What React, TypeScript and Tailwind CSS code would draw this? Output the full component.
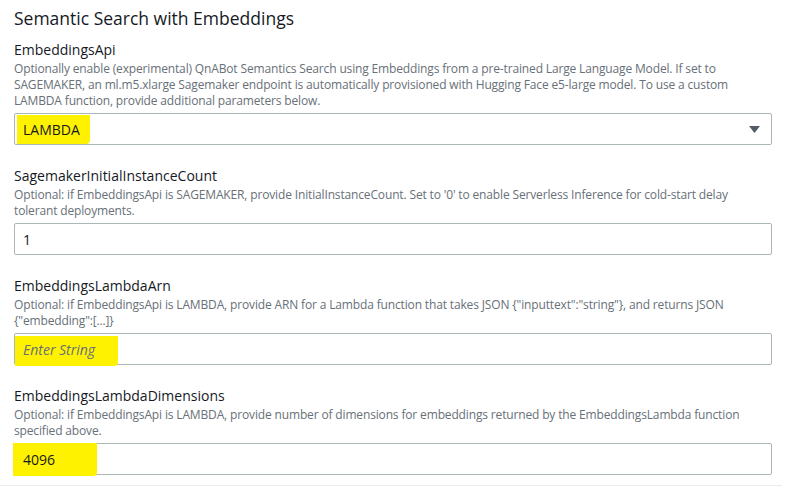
const fields = [
  {
    name: "EmbeddingsApi",
    lines: [
      "Optionally enable (experimental) QnABot Semantics Search using Embeddings from a pre-trained Large Language Model. If set to",
      "SAGEMAKER, an ml.m5.xlarge Sagemaker endpoint is automatically provisioned with Hugging Face e5-large model. To use a custom",
      "LAMBDA function, provide additional parameters below.",
    ],
    value: "LAMBDA",
    kind: "select",
    hl: "w-[73px] h-[29px] left-[2px] top-[1px]",
  },
  {
    name: "SagemakerInitialInstanceCount",
    lines: [
      "Optional: if EmbeddingsApi is SAGEMAKER, provide InitialInstanceCount. Set to '0' to enable Serverless Inference for cold-start delay",
      "tolerant deployments.",
    ],
    value: "1",
    kind: "input",
    hl: "",
  },
  {
    name: "EmbeddingsLambdaArn",
    lines: [
      'Optional: if EmbeddingsApi is LAMBDA, provide ARN for a Lambda function that takes JSON {"inputtext":"string"}, and returns JSON',
      '{"embedding":[...]}',
    ],
    value: "Enter String",
    kind: "placeholder",
    hl: "w-[103px] h-[30px] left-0 top-[2px]",
  },
  {
    name: "EmbeddingsLambdaDimensions",
    lines: [
      "Optional: if EmbeddingsApi is LAMBDA, provide number of dimensions for embeddings returned by the EmbeddingsLambda function",
      "specified above.",
    ],
    value: "4096",
    kind: "input",
    hl: "w-[84px] h-[33px] left-[-2px] top-[-1px]",
  },
];

export default function App() {
  return (
    <div className="w-[791px] h-[487px] bg-white overflow-hidden font-['Open_Sans',sans-serif]">
      <div className="pl-[14px] pt-[6px]">
        <h2 className="text-[17.5px] leading-[24px] text-[#16191f]">Semantic Search with Embeddings</h2>
        <div className="mt-[10px] flex flex-col gap-[21px]">
          {fields.map((f) => (
            <div key={f.name}>
              <div className="text-[14px] leading-[20px] text-[#16191f]">{f.name}</div>
              <div className="mt-[1px] text-[12px] leading-[16px] text-[#687078] tracking-[-0.15px]">
                {f.lines.map((l) => (
                  <div key={l} className="whitespace-nowrap">{l}</div>
                ))}
              </div>
              <div className="relative mt-[4px] w-[758px] h-[32px] border border-[#aab7b8] rounded-[2px] flex items-center px-[8px]">
                {f.hl && (
                  <span className={`absolute bg-[#fff200] rounded-br-[4px] ${f.hl}`} />
                )}
                <span
                  className={
                    f.kind === "placeholder"
                      ? "relative text-[14px] italic text-[#687078]"
                      : "relative text-[14px] text-[#16191f]"
                  }
                >
                  {f.value}
                </span>
                {f.kind === "select" && (
                  <svg className="absolute right-[11px] top-[12px]" width="11" height="7" viewBox="0 0 11 7">
                    <path d="M0 0 L11 0 L5.5 7 Z" fill="#545b64" />
                  </svg>
                )}
              </div>
            </div>
          ))}
        </div>
      </div>
      <div className="mt-[10px] w-[782px] h-px bg-[#eaeded]" />
    </div>
  );
}
